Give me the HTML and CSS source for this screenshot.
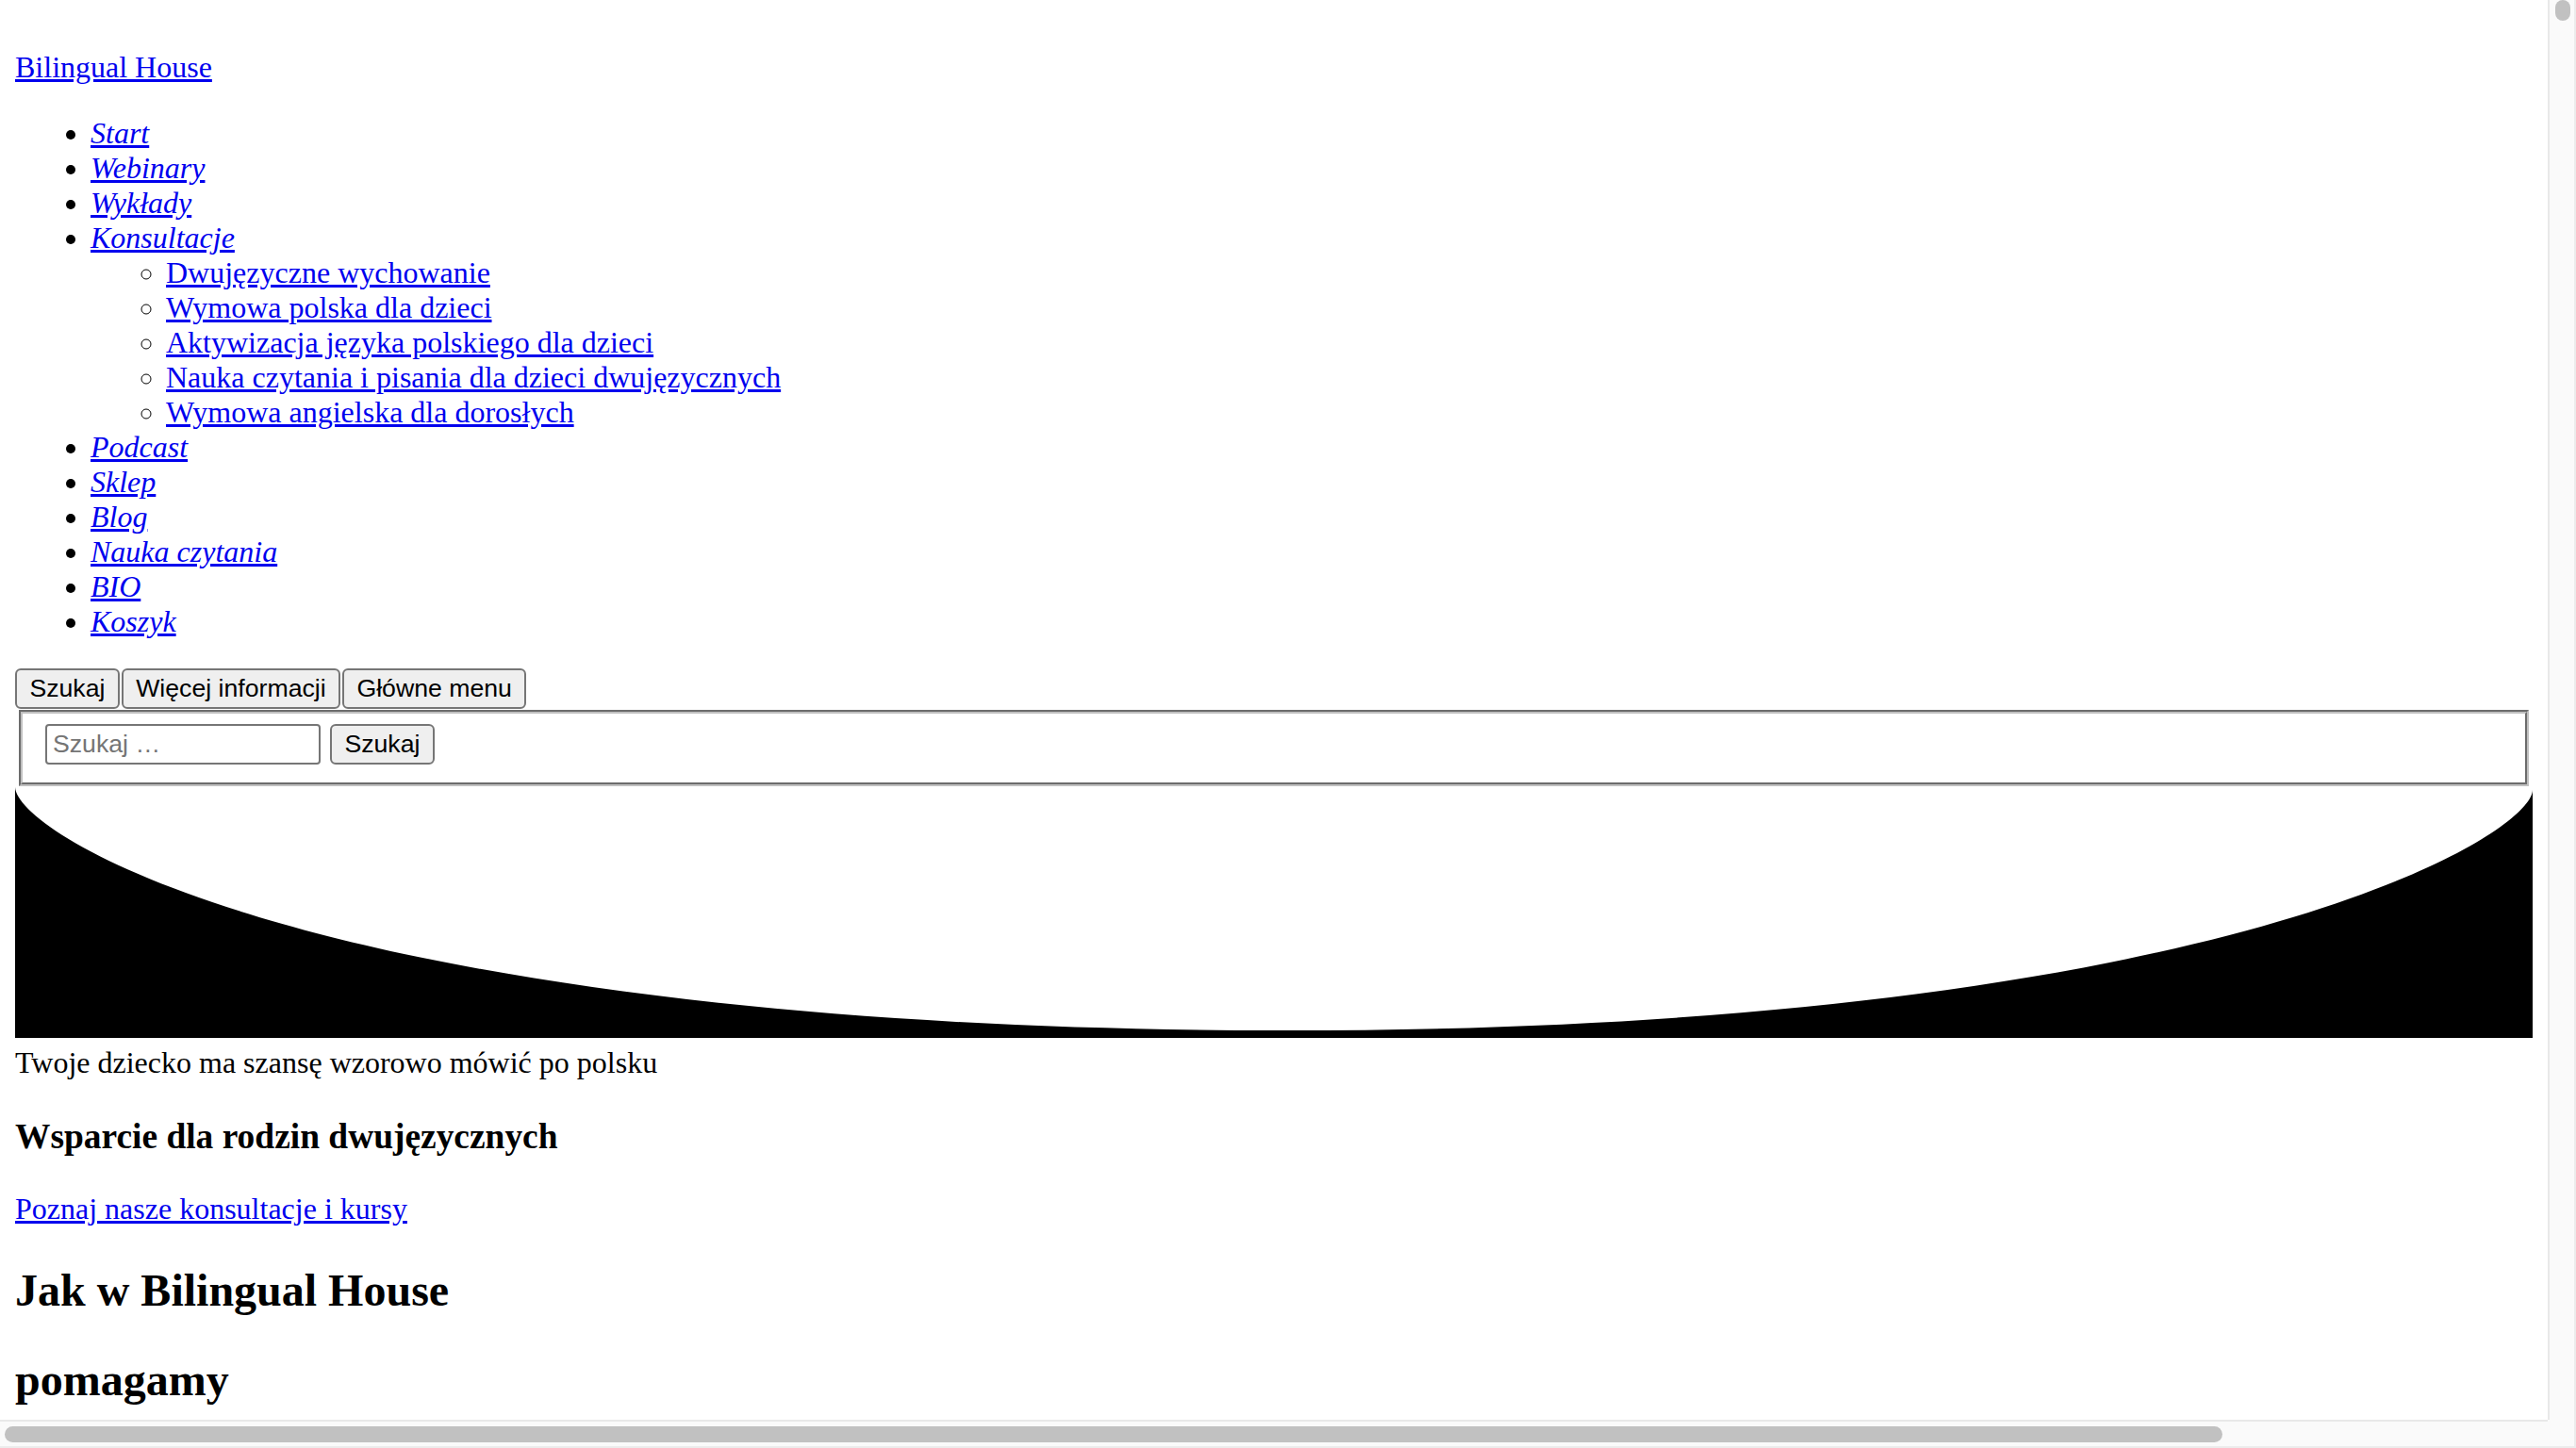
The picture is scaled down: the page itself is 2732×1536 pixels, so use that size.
FILE: index.html
```html
<!DOCTYPE html>
<html lang="pl">
<head>
<meta charset="utf-8">
<title>Bilingual House</title>
<link rel="stylesheet" href="styles.css">
</head>
<body>
<header class="site-header">
  <p class="site-title"><a class="site-link" href="#">Bilingual House</a></p>
  <nav class="main-nav">
    <ul class="menu">
      <li><a class="menu-link" href="#">Start</a></li>
      <li><a class="menu-link" href="#">Webinary</a></li>
      <li><a class="menu-link" href="#">Wykłady</a></li>
      <li><a class="menu-link" href="#">Konsultacje</a>
        <ul class="sub-menu">
          <li><a class="sub-link" href="#">Dwujęzyczne wychowanie</a></li>
          <li><a class="sub-link" href="#">Wymowa polska dla dzieci</a></li>
          <li><a class="sub-link" href="#">Aktywizacja języka polskiego dla dzieci</a></li>
          <li><a class="sub-link" href="#">Nauka czytania i pisania dla dzieci dwujęzycznych</a></li>
          <li><a class="sub-link" href="#">Wymowa angielska dla dorosłych</a></li>
        </ul>
      </li>
      <li><a class="menu-link" href="#">Podcast</a></li>
      <li><a class="menu-link" href="#">Sklep</a></li>
      <li><a class="menu-link" href="#">Blog</a></li>
      <li><a class="menu-link" href="#">Nauka czytania</a></li>
      <li><a class="menu-link" href="#">BIO</a></li>
      <li><a class="menu-link" href="#">Koszyk</a></li>
    </ul>
  </nav>
  <div class="header-toggles">
    <button class="toggle" type="button">Szukaj</button>
    <button class="toggle" type="button">Więcej informacji</button>
    <button class="toggle" type="button">Główne menu</button>
  </div>
  <fieldset class="search-panel">
    <form class="search-form" action="#">
      <input class="search-field" type="text" placeholder="Szukaj …">
      <button class="search-submit" type="submit">Szukaj</button>
    </form>
  </fieldset>
</header>
<main class="site-main">
  <div class="shape-divider">
    <svg class="shape-svg" xmlns="http://www.w3.org/2000/svg" viewBox="0 0 1000 100" preserveAspectRatio="none"><path class="shape-fill" d="M500,97C126.7,96.3,0.8,19.8,0,0v100l1000,0V1C1000,19.4,873.3,97.8,500,97z"/></svg>
  </div>
  <div class="hero-lead">Twoje dziecko ma szansę wzorowo mówić po polsku</div>
  <h3 class="hero-title">Wsparcie dla rodzin dwujęzycznych</h3>
  <p class="hero-cta"><a class="cta-link" href="#">Poznaj nasze konsultacje i kursy</a></p>
  <h2 class="section-title">Jak w Bilingual House</h2>
  <h2 class="section-title">pomagamy</h2>
</main>
<div class="scrollbar scrollbar-v"><span class="thumb thumb-v"></span></div>
<div class="scrollbar scrollbar-h"><span class="thumb thumb-h"></span></div>
<div class="scrollbar-corner"></div>
</body>
</html>
```

FILE: styles.css
```css
html {
  background: #ffffff;
}

body {
  margin: 16px 46px 16px 16px;
  font-family: "Liberation Serif", "Times New Roman", serif;
  font-size: 32px;
  line-height: normal;
  color: #000000;
}

a {
  color: #0000ee;
  text-decoration: underline;
}

.site-header {
  padding-top: 5px;
}

.site-title {
  margin: 32px 0;
}

.menu {
  margin: 33px 0 31px;
  padding-left: 80px;
  list-style: disc;
}

.menu-link {
  font-style: italic;
}

.sub-menu {
  margin: 0;
  padding-left: 80px;
  list-style: circle;
}

.sub-link {
  font-style: normal;
}

.header-toggles {
  display: flex;
  gap: 2px;
}

.toggle,
.search-submit {
  margin: 0;
  padding: 4px 13.4px;
  font-family: "Liberation Sans", Arial, sans-serif;
  font-size: 26.667px;
  line-height: normal;
  color: #000000;
  background: #efefef;
  border: 2px solid #767676;
  border-radius: 6px;
}

.search-panel {
  margin: 1px 4px 0;
  padding: 11.2px 24px 19px;
  border: 4px groove rgb(192, 192, 192);
  min-width: 0;
}

.search-form {
  display: flex;
  align-items: flex-start;
  gap: 10px;
  margin: 0;
}

.search-field {
  box-sizing: border-box;
  width: 292px;
  margin: 0;
  padding: 4px 6px;
  font-family: "Liberation Sans", Arial, sans-serif;
  font-size: 26.667px;
  line-height: normal;
  color: #000000;
  background: #ffffff;
  border: 2px solid #767676;
  border-radius: 4px;
}

.search-field::placeholder {
  color: #757575;
}

.shape-divider {
  margin: 1px 0 8px;
}

.shape-svg {
  display: block;
  width: 100%;
  height: 266px;
}

.shape-fill {
  fill: #000000;
}

.hero-lead {
  margin: 0;
}

.hero-title {
  font-size: 37.44px;
  margin: 37.44px 0;
}

.hero-cta {
  margin: 32px 0;
}

.section-title {
  font-size: 48px;
  margin: 39.84px 0;
}

/* window scrollbars (drawn over the viewport edges) */
.scrollbar {
  position: fixed;
  box-sizing: border-box;
  background: #fafafa;
  z-index: 10;
}

.scrollbar-v {
  top: 0;
  right: 0;
  width: 30px;
  height: 1506px;
  padding: 0 4px 0 6px;
  border-left: 2px solid #e8e8e8;
  border-right: 2px solid #ececec;
}

.scrollbar-h {
  left: 0;
  bottom: 0;
  width: 2702px;
  height: 30px;
  padding: 5px 0 0 5px;
  border-top: 2px solid #e8e8e8;
  border-bottom: 2px solid #ececec;
}

.scrollbar-corner {
  position: fixed;
  right: 0;
  bottom: 0;
  box-sizing: border-box;
  width: 30px;
  height: 30px;
  background: #fafafa;
  border-right: 2px solid #ececec;
  border-bottom: 2px solid #ececec;
  z-index: 10;
}

.thumb {
  display: block;
  background: #c1c1c1;
}

.thumb-v {
  width: 16px;
  height: 22px;
  border-radius: 8px;
}

.thumb-h {
  width: 2352px;
  height: 17px;
  border-radius: 9px;
}
```
